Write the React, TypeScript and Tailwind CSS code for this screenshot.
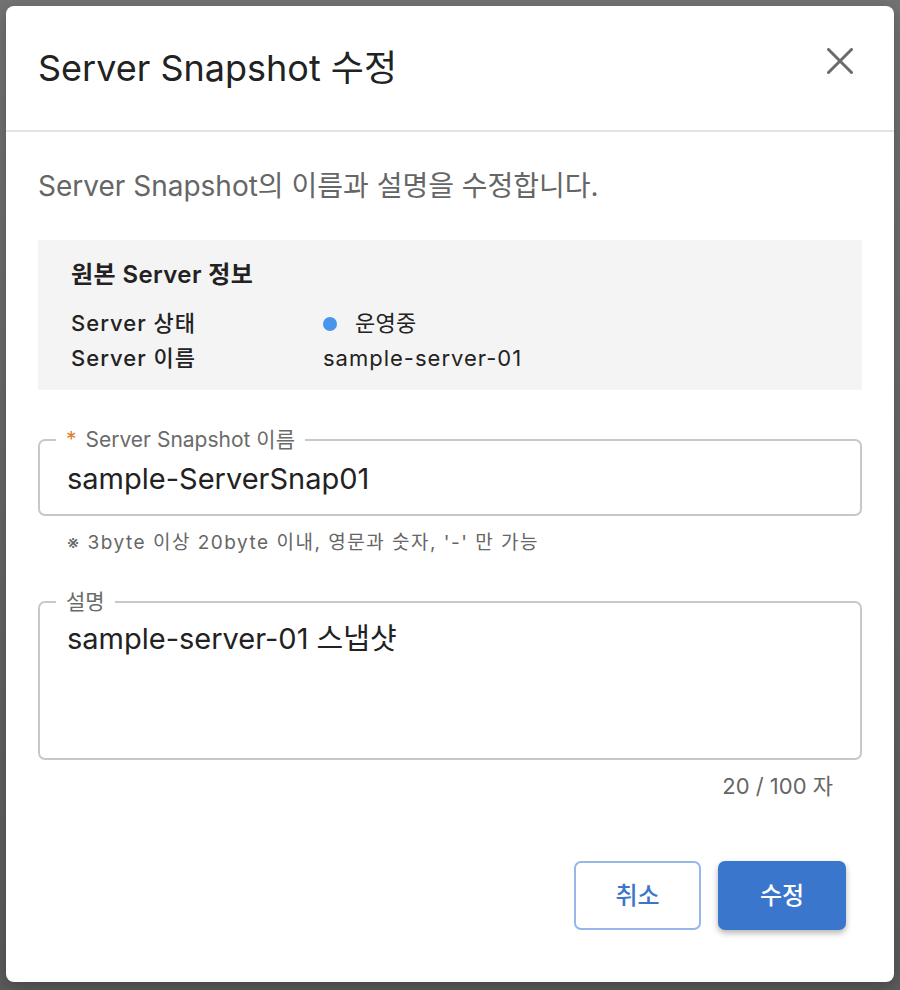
const font = { fontFamily: 'Inter, "Noto Sans CJK KR", sans-serif' };

export default function App() {
  return (
    <div className="w-[900px] h-[990px] bg-gradient-to-b from-[#737373] to-[#5b5b5b] pt-[6px] px-[6px] overflow-hidden" style={font}>
      <div className="w-[888px] h-[976px] bg-white rounded-[8px] flex flex-col shadow-[0_4px_16px_rgba(0,0,0,0.25)]">
        {/* Header */}
        <div className="h-[126px] flex items-center justify-between pl-[32px] pr-[41px] border-b-2 border-[#e3e3e3]">
          <h1 className="text-[36px] leading-[44px] text-[#222]">Server Snapshot 수정</h1>
          <button className="text-[#6b6b6b] mb-[14px]">
            <svg width="26" height="26" viewBox="0 0 26 26" fill="none" stroke="currentColor" strokeWidth="3" strokeLinecap="round">
              <path d="M1.5 1.5L24.5 24.5M24.5 1.5L1.5 24.5" />
            </svg>
          </button>
        </div>

        {/* Body */}
        <div className="px-[32px] pt-[36px] flex flex-col">
          <p className="text-[28px] leading-[36px] text-[#666]">Server Snapshot의 이름과 설명을 수정합니다.</p>

          <div className="mt-[36px] h-[150px] bg-[#f4f4f4] pl-[33px] pt-[20px]">
            <div className="text-[24px] leading-[30px] font-semibold tracking-[0.4px] text-[#222]">원본 Server 정보</div>
            <div className="mt-[16px] flex items-center h-[35px] text-[22px] tracking-[1px]">
              <span className="w-[252px] font-medium text-[#222]">Server 상태</span>
              <span className="flex items-center gap-[18px] text-[#222] tracking-[0.3px]">
                <span className="w-[14px] h-[14px] rounded-full bg-[#4a94ea]" />
                운영중
              </span>
            </div>
            <div className="flex items-center h-[35px] text-[22px] tracking-[1px]">
              <span className="w-[252px] font-medium text-[#222]">Server 이름</span>
              <span className="text-[#222]">sample-server-01</span>
            </div>
          </div>

          {/* Name field */}
          <fieldset className="mt-[36px] border-2 border-[#c8c8c8] rounded-[7px] h-[90px] px-[27px]">
            <legend className="ml-[-11px] px-[10px] text-[21px] leading-[28px] text-[#6b6b6b]">
              <span className="text-[#e07b2a] mr-[9px]">*</span>Server Snapshot 이름
            </legend>
            <div className="text-[29px] leading-[38px] text-[#222] mt-[6px]">sample-ServerSnap01</div>
          </fieldset>
          <p className="mt-[14px] pl-[29px] text-[19px] leading-[26px] tracking-[1.5px] text-[#666]">※ 3byte 이상 20byte 이내, 영문과 숫자, '-' 만 가능</p>

          {/* Description field */}
          <fieldset className="mt-[32px] border-2 border-[#c8c8c8] rounded-[7px] h-[172px] px-[27px]">
            <legend className="ml-[-11px] px-[10px] text-[21px] leading-[28px] text-[#6b6b6b]">설명</legend>
            <div className="text-[29px] leading-[38px] text-[#222] mt-[4px]">sample-server-01 스냅샷</div>
          </fieldset>
          <p className="mt-[12px] pr-[29px] text-right text-[22px] leading-[28px] text-[#666]">20 / 100 자</p>

          {/* Footer buttons */}
          <div className="mt-[61px] flex justify-end gap-[17px] pr-[16px]">
            <button className="w-[127px] h-[69px] rounded-[7px] border-2 border-[#94b8ea] text-[24px] font-medium text-[#3a76cc]">취소</button>
            <button className="w-[128px] h-[69px] rounded-[7px] bg-[#3a76cc] text-[24px] font-medium text-white shadow-[0_3px_6px_rgba(0,0,0,0.3)]">수정</button>
          </div>
        </div>
      </div>
    </div>
  );
}
